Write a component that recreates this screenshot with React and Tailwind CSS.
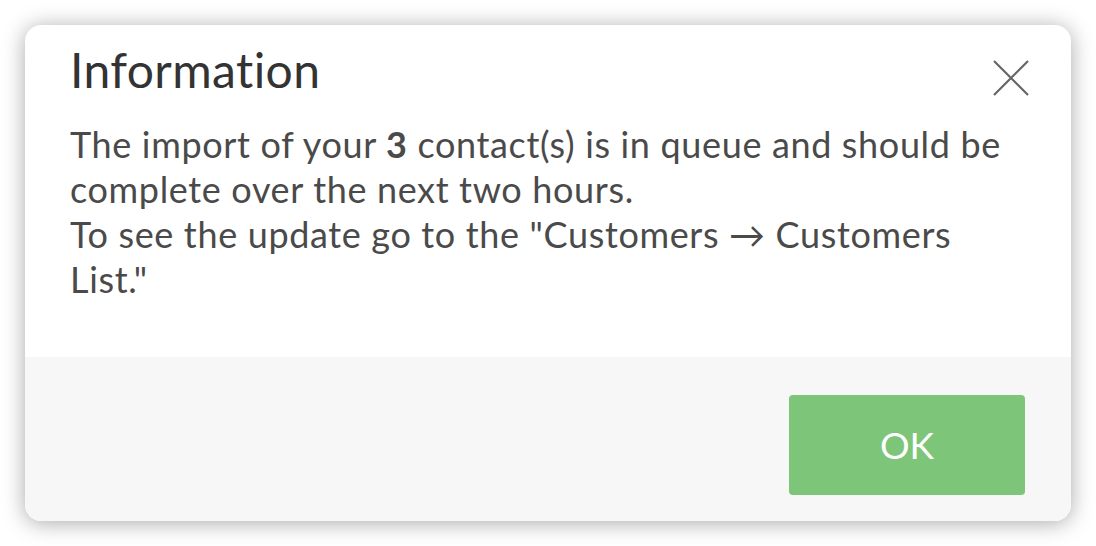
import React from 'react';

export default function App() {
  return (
    <div className="w-[1096px] h-[546px] bg-white p-[25px]" style={{ fontFamily: 'Lato, "Open Sans", sans-serif' }}>
      <div className="flex h-full flex-col overflow-hidden rounded-[16px] bg-white shadow-[0_2px_22px_rgba(0,0,0,0.34)]">
        <div className="flex h-[332px] flex-col px-[45px] pt-[17px] [font-variant-ligatures:none]">
          <div className="flex items-start justify-between">
            <h2 className="text-[48px] leading-[56px] tracking-[0.4px] text-[#333333]">Information</h2>
            <button className="mt-[18px] mr-[-3px] text-[#666666]" aria-label="Close">
              <svg width="36" height="36" viewBox="0 0 36 36" fill="none" stroke="currentColor" strokeWidth="2.2">
                <path d="M1 1L35 35M35 1L1 35" />
              </svg>
            </button>
          </div>
          <p className="mt-[24px] text-[36px] leading-[45px] tracking-[0.65px] text-[#4a4a4a]">
            The import of your <b className="font-bold">3</b> contact(s) is in queue and should be complete over the next two hours.
            <br />
            To see the update go to the "Customers → Customers List."
          </p>
        </div>
        <div className="flex flex-1 justify-end bg-[#f7f7f7] pt-[38px] pr-[46px]">
          <button className="h-[100px] w-[236px] rounded-[4px] bg-[#7dc578] text-[37px] text-white">OK</button>
        </div>
      </div>
    </div>
  );
}
